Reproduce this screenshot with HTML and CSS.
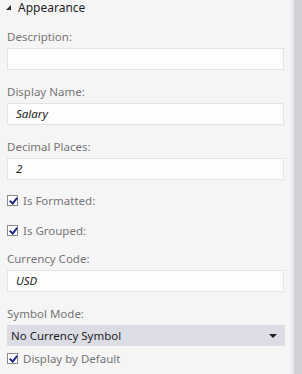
FILE: index.html
```html
<!DOCTYPE html>
<html lang="en">
<head>
  <meta charset="UTF-8">
  <title>Appearance</title>
  <link rel="stylesheet" href="styles.css">
</head>
<body>
  <div class="pane">
    <div class="props">
      <div class="group-head">
        <span class="twisty"></span>
        <span class="group-title">Appearance</span>
      </div>

      <div class="field">
        <div class="field-label">Description:</div>
        <div class="field-box"></div>
      </div>
      <div class="field">
        <div class="field-label">Display Name:</div>
        <div class="field-box">Salary</div>
      </div>
      <div class="field">
        <div class="field-label">Decimal Places:</div>
        <div class="field-box">2</div>
      </div>

      <div class="check-row first">
        <span class="check"></span>
        <span class="check-text">Is Formatted:</span>
      </div>
      <div class="check-row">
        <span class="check"></span>
        <span class="check-text">Is Grouped:</span>
      </div>

      <div class="field after-check">
        <div class="field-label">Currency Code:</div>
        <div class="field-box">USD</div>
      </div>
      <div class="field">
        <div class="field-label">Symbol Mode:</div>
        <div class="field-select">
          <span>No Currency Symbol</span>
          <span class="select-arrow"></span>
        </div>
      </div>

      <div class="check-row last">
        <span class="check"></span>
        <span class="check-text">Display by Default</span>
      </div>
    </div>
    <div class="edge"></div>
    <div class="scrollbar"></div>
  </div>
</body>
</html>
```

FILE: styles.css
```css
html, body {
  margin: 0;
  padding: 0;
  height: 100%;
}
body {
  font-family: "Noto Sans", "Open Sans", sans-serif;
  font-size: 11.5px;
  color: #757575;
  background: #f5f5f5;
}
.pane {
  display: flex;
  height: 100%;
}
.props {
  flex: 1;
  padding: 0 7px 0 7px;
}
.edge {
  width: 3px;
  background: #eaeaed;
}
.scrollbar {
  width: 8px;
  background: #d0d1d7;
}

/* group header */
.group-head {
  display: flex;
  align-items: center;
  height: 15px;
  margin-left: -1px;
}
.twisty {
  width: 0;
  height: 0;
  border-left: 5px solid transparent;
  border-bottom: 5px solid #2b2b2b;
  margin-right: 7px;
}
.group-title {
  color: #1e1e1e;
  font-size: 12px;
}

/* text fields */
.field {
  margin-top: 14px;
}
.field-label {
  line-height: 16px;
  margin-bottom: 3px;
}
.field-box {
  box-sizing: border-box;
  height: 22px;
  background: #fdfdfd;
  border: 1px solid #e4e4e6;
  padding: 0 8px;
  line-height: 20px;
  font-style: italic;
  color: #1e1e1e;
}
.field-select {
  display: flex;
  justify-content: space-between;
  align-items: center;
  height: 21px;
  margin-right: -1px;
  padding: 0 8px 0 4px;
  background: #dcdce5;
  color: #1e1e1e;
}
.select-arrow {
  width: 0;
  height: 0;
  border-left: 4px solid transparent;
  border-right: 4px solid transparent;
  border-top: 4px solid #1e1e1e;
}

/* checkboxes */
.check-row {
  display: flex;
  align-items: center;
  height: 16px;
  margin-top: 14px;
}
.check-row.first {
  margin-top: 12px;
}
.check-row.last {
  margin-top: 4px;
}
.after-check {
  margin-top: 13px;
}
.check {
  position: relative;
  box-sizing: border-box;
  width: 11px;
  height: 11px;
  border: 1px solid #8a8a8a;
  background: #fff;
  margin-right: 5px;
}
.check::after {
  content: "";
  position: absolute;
  left: 3px;
  top: 0px;
  width: 3px;
  height: 6px;
  border-right: 2px solid #1f2a8c;
  border-bottom: 2px solid #1f2a8c;
  transform: rotate(40deg);
}
```
